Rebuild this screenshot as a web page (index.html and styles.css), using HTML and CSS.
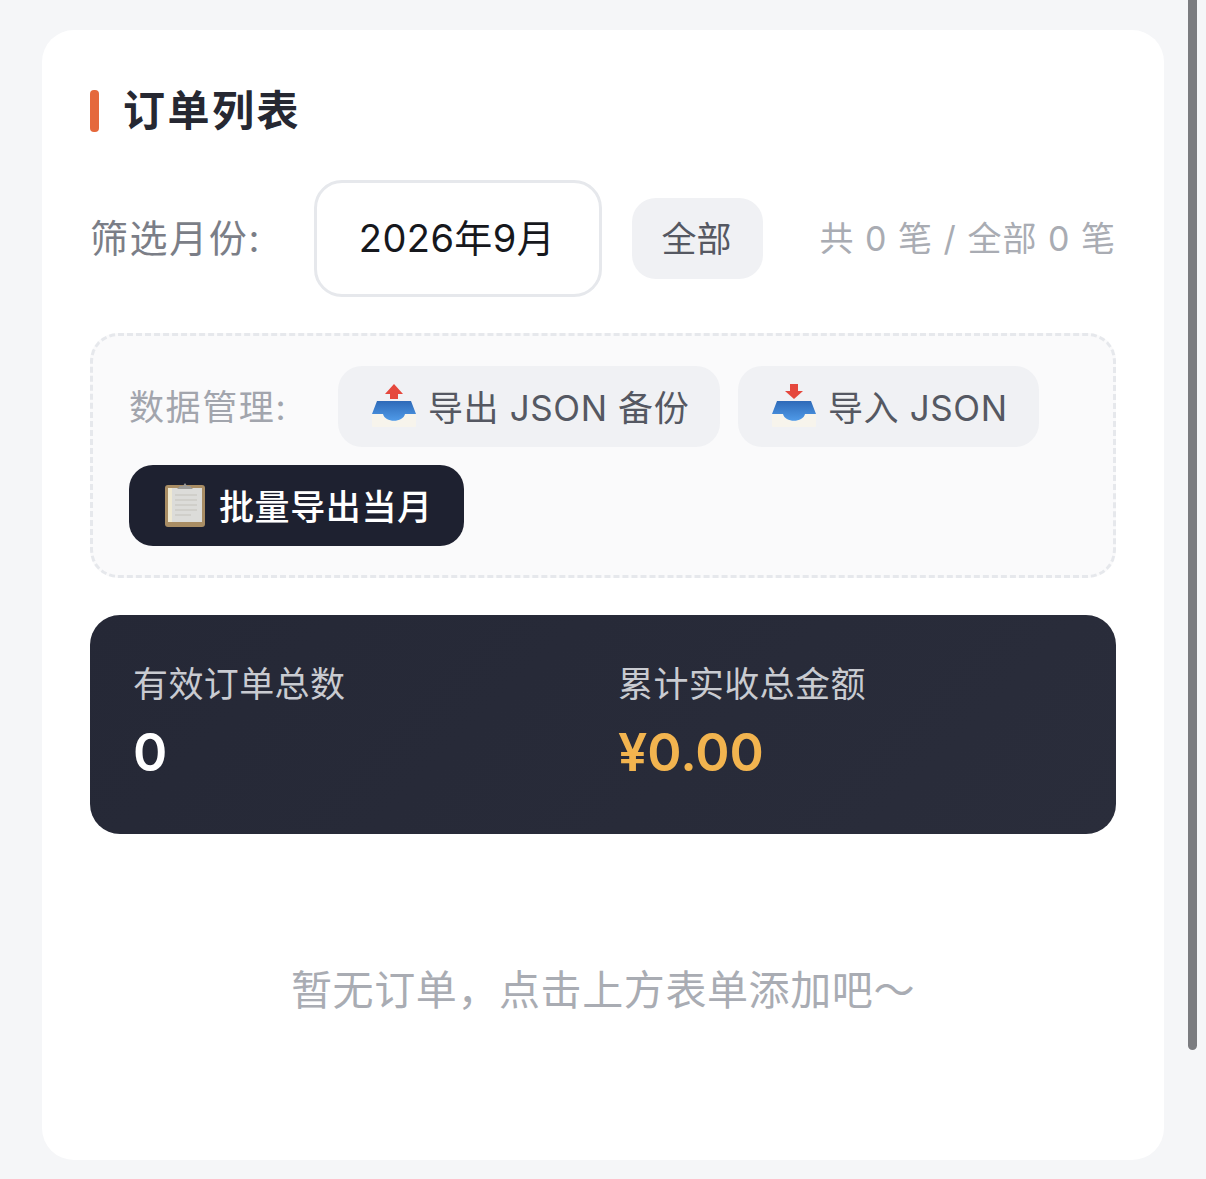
FILE: index.html
```html
<!DOCTYPE html>
<html lang="zh-CN">
<head>
    <meta charset="UTF-8">
    <meta name="viewport" content="width=device-width, initial-scale=1.0">
    <title>订单列表</title>
    <link rel="stylesheet" href="styles.css">
</head>
<body>
    <div class="card">
        <h2 class="title">订单列表</h2>

        <div class="filter-row">
            <span class="filter-label">筛选月份:</span>
            <div class="month-input">2026年9月</div>
            <button class="all-button">全部</button>
            <span class="count">共 0 笔 / 全部 0 笔</span>
        </div>

        <div class="data-box">
            <span class="data-label">数据管理:</span>
            <button class="data-button export-button">
                <svg class="tray" viewBox="0 0 44 44">
                    <defs>
                        <linearGradient id="blue" x1="0" y1="0" x2="0" y2="1">
                            <stop offset="0" stop-color="#2e6ab8"/>
                            <stop offset="1" stop-color="#4f9ae8"/>
                        </linearGradient>
                    </defs>
                    <path d="M0 30h13l18 0h13v12q0 1-1 1H1q-1 0-1-1z" fill="#f7f4ec"/>
                    <path d="M5 17h34l5 13H33c-2 9-20 9-22 0H0z" fill="url(#blue)"/>
                    <path d="M22 0l9 10h-5v5h-8v-5h-5z" fill="#e5483d"/>
                </svg>
                导出 JSON 备份
            </button>
            <button class="data-button import-button">
                <svg class="tray" viewBox="0 0 44 44">
                    <path d="M0 30h13l18 0h13v12q0 1-1 1H1q-1 0-1-1z" fill="#f7f4ec"/>
                    <path d="M5 17h34l5 13H33c-2 9-20 9-22 0H0z" fill="url(#blue)"/>
                    <path d="M22 15l9-8h-5V0h-8v7h-5z" fill="#e5483d"/>
                </svg>
                导入 JSON
            </button>
            <button class="data-button dark-button">
                <svg class="clipboard" viewBox="0 0 40 44">
                    <rect x="0" y="2" width="40" height="42" rx="3" fill="#a98d64"/>
                    <rect x="3" y="5" width="34" height="34" fill="#dcdcd9"/>
                    <path d="M3 5h4v34H3z" fill="#efe9d2"/>
                    <path d="M10 12h22M10 17h22M10 22h22M10 27h22M10 32h16" stroke="#cbcac5" stroke-width="1.5"/>
                    <path d="M12 6l3-3h3l2-3 2 3h3l3 3z" fill="#9b9a97"/>
                </svg>
                批量导出当月
            </button>
        </div>

        <div class="stats">
            <div class="stat">
                <div class="stat-label">有效订单总数</div>
                <div class="stat-value">0</div>
            </div>
            <div class="stat">
                <div class="stat-label">累计实收总金额</div>
                <div class="stat-value gold">¥0.00</div>
            </div>
        </div>

        <div class="empty">暂无订单，点击上方表单添加吧～</div>
    </div>

    <div class="scrollbar"></div>
</body>
</html>
```

FILE: styles.css
```css
* {
    box-sizing: border-box;
}
html, body {
    height: 100%;
}
body {
    margin: 0;
    padding: 30px 42px 19px;
    background-color: #f5f6f8;
    font-family: Inter, "Noto Sans CJK SC", sans-serif;
    overflow: hidden;
}
button {
    font-family: inherit;
    border: none;
}
.card {
    height: 1130px;
    padding: 60px 48px 0;
    background-color: #fff;
    border-radius: 32px;
}
.title {
    display: flex;
    align-items: center;
    height: 42px;
    margin: 0;
    font-size: 42px;
    line-height: 34px;
    font-weight: 700;
    letter-spacing: 2.5px;
    color: #262832;
}
.title::before {
    content: "";
    width: 9px;
    height: 42px;
    margin-right: 24px;
    border-radius: 4px;
    background-color: #e5683c;
}
.filter-row {
    display: flex;
    align-items: center;
    margin-top: 48px;
}
.filter-label {
    width: 224px;
    padding-bottom: 6px;
    font-size: 38px;
    letter-spacing: 1.6px;
    color: #7b7e87;
}
.month-input {
    display: flex;
    align-items: center;
    justify-content: center;
    width: 288px;
    height: 117px;
    padding: 0 2px 6px 0;
    border: 3px solid #e6e8ec;
    border-radius: 28px;
    font-size: 38px;
    letter-spacing: 0.4px;
    color: #16181d;
}
.all-button {
    width: 131px;
    height: 81px;
    margin-left: 30px;
    padding: 0 2px 5px 0;
    border-radius: 24px;
    background-color: #f0f1f4;
    font-size: 35px;
    color: #555862;
}
.count {
    margin-left: auto;
    padding-bottom: 4px;
    font-size: 34px;
    letter-spacing: 1px;
    color: #a9acb3;
    white-space: nowrap;
}
.data-box {
    display: flex;
    flex-wrap: wrap;
    align-items: center;
    gap: 18px;
    height: 245px;
    margin-top: 36px;
    padding: 30px 36px;
    border: 3px dashed #e6e8ec;
    border-radius: 28px;
    background-color: #fafafb;
}
.data-label {
    width: 191px;
    padding-bottom: 4px;
    font-size: 35px;
    letter-spacing: 1.6px;
    color: #a2a5ad;
}
.data-button {
    display: flex;
    align-items: center;
    height: 81px;
    padding-bottom: 3px;
    border-radius: 24px;
    background-color: #f0f1f4;
    font-size: 35px;
    letter-spacing: 0.6px;
    color: #555862;
    white-space: nowrap;
}
.export-button {
    width: 382px;
    padding-left: 34px;
}
.import-button {
    width: 301px;
    padding-left: 34px;
}
.dark-button {
    width: 335px;
    padding-left: 36px;
    background-color: #1e2130;
    font-weight: 500;
    color: #fff;
}
.tray {
    width: 44px;
    height: 44px;
    margin-right: 12px;
}
.clipboard {
    width: 40px;
    height: 44px;
    margin-right: 14px;
}
.stats {
    display: flex;
    height: 219px;
    margin-top: 37px;
    padding: 44px 43px 0;
    border-radius: 30px;
    background: linear-gradient(135deg, #252836, #2a2d3b);
}
.stat {
    flex: none;
    width: 485px;
}
.stat-label {
    font-size: 35px;
    line-height: 50px;
    letter-spacing: 0.4px;
    color: #c9cbd1;
}
.stat-value {
    margin-top: 12px;
    font-size: 52px;
    line-height: 64px;
    font-weight: 600;
    color: #fff;
}
.gold {
    color: #f2b44f;
}
.empty {
    margin-top: 128px;
    font-size: 41px;
    line-height: 56px;
    letter-spacing: 0.6px;
    text-align: center;
    color: #a9acb3;
}
.scrollbar {
    position: absolute;
    top: 0;
    left: 1188px;
    width: 9px;
    height: 1050px;
    border-radius: 0 0 5px 5px;
    background-color: #7b7c80;
}
```
